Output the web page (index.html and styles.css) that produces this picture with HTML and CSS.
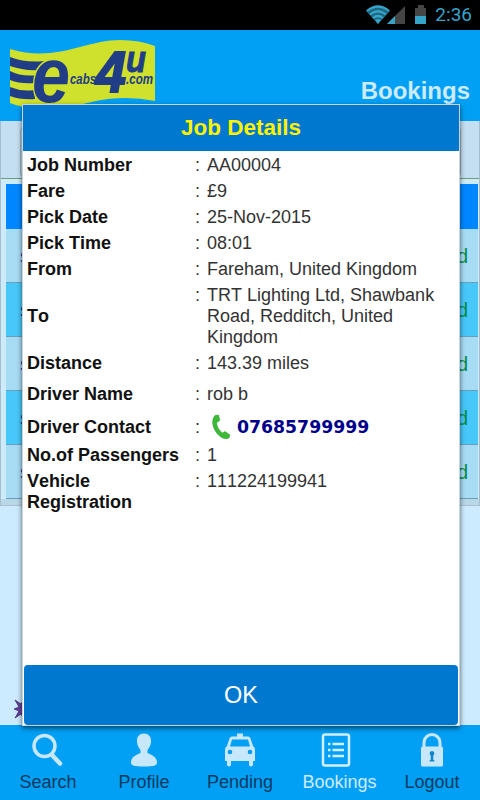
FILE: index.html
```
<!DOCTYPE html>
<html lang="en">
<head>
    <meta charset="UTF-8">
    <meta name="viewport" content="width=device-width, initial-scale=1.0">
    <title>Bookings</title>
    <link rel="stylesheet" href="styles.css">
</head>
<body>
<div class="screen">
    <div class="statusbar">
        <svg class="signal" width="60" height="20" viewBox="0 0 60 20">
            <path d="M0 6Q12-4 24 6L12 19Z" fill="#1d6680"/>
            <path d="M1 6Q12-3 23 6M4 9.500Q12 3 20 9.500M7 13Q12 9 17 13" fill="none" stroke="#36a4c9" stroke-width="2.200"/>
            <path d="M12 19l-3-4q3-2 6 0z" fill="#36a4c9"/>
            <path d="M39 1v18H21z" fill="#454545"/>
            <path d="M29 11v8h-8z" fill="#36a4c9"/>
            <path d="M49 3h3V0h6v3h3v16H49z" fill="#454545"/>
            <path d="M49 11h11v8H49z" fill="#36a4c9"/>
        </svg>
        <span class="clock">2:36</span>
    </div>
    <div class="header">
        <svg class="logo" width="145" height="70" viewBox="0 0 145 70">
            <path d="M0 9C45 23 75 0 110 0q20 0 35 6v55Q122 56 98 59C70 63 60 70 35 70Q12 68 0 63Z" fill="#cfe02d"/>
            <path d="M0 17Q16 23 34 21L29 30Q14 31 0 26ZM0 31Q12 37 27 35L24 43Q10 44 0 40ZM0 47Q12 52 24 50L25 59Q11 60 0 56Z" fill="#213d86"/>
            <g class="logo-text">
                <text x="22" y="62" font-size="78" textLength="38" lengthAdjust="spacingAndGlyphs" stroke="#cfe02d" stroke-width="3" paint-order="stroke">e</text>
                <text x="60" y="44" font-size="14" textLength="26" lengthAdjust="spacingAndGlyphs">cabs</text>
                <text x="86" y="52" font-size="57" textLength="30" lengthAdjust="spacingAndGlyphs" stroke="#213d86" stroke-width="2">4</text>
                <text x="116" y="32" font-size="37" textLength="20" lengthAdjust="spacingAndGlyphs" stroke="#213d86">u</text>
                <text x="116" y="44" font-size="14" textLength="27" lengthAdjust="spacingAndGlyphs">.com</text>
            </g>
        </svg>
        <h1>Bookings</h1>
    </div>
    <div class="content">
        <div class="panel">
            <div class="filter"><div class="filter-box"></div></div>
            <div class="list">
                <div class="list-head"></div>
                <div class="list-row"><a>s</a><span>d</span></div>
                <div class="list-row"><a>s</a><span>d</span></div>
                <div class="list-row"><a>s</a><span>d</span></div>
                <div class="list-row"><a>s</a><span>d</span></div>
                <div class="list-row"><a>s</a><span>d</span></div>
            </div>
        </div>
        <svg class="star" width="20" height="20" viewBox="0 0 20 20">
            <path d="M0 10l5-2-4-7 6 4 3-5 3 5 6-4-4 7 5 2-5 2 4 6-6-3-3 5-3-5-6 4 4-7z" fill="#67419c" stroke="#38236c" stroke-width=".7"/>
        </svg>
    </div>
    <div class="tabs">
        <div class="tab">
            <svg width="34" height="34" viewBox="0 0 34 34">
                <circle cx="13.500" cy="13" r="10.500" fill="none" stroke="#c7e8fb" stroke-width="3.500"/>
                <path d="M21 22l8 8.500" stroke="#c7e8fb" stroke-width="4.500" stroke-linecap="round"/>
            </svg>
            <span>Search</span>
        </div>
        <div class="tab">
            <svg width="34" height="34" viewBox="0 0 34 34">
                <path d="M17 0.500c-5 0-7.500 4-7 8.500.4 4 2 6 3.500 8v3C9 22 4 24 4 29.500c0 3 3 4 13 4s13-1 13-4C30 24 25 22 20.500 20v-3c1.500-2 3.100-4 3.500-8 .5-4.500-2-8.500-7-8.500z" fill="#c7e8fb"/>
            </svg>
            <span>Profile</span>
        </div>
        <div class="tab">
            <svg width="34" height="34" viewBox="0 0 34 34">
                <path fill-rule="evenodd" d="M14 0.500h6v3h5q2 0 2.500 2L30 13q2 1 2 4v11h-2v3.500q0 2-2 2t-2-2V28H8v3.500q0 2-2 2t-2-2V28H2V17q0-3 2-4L6.500 5.500q.5-2 2.500-2h5zM9 6.500L7 13.500h20l-2-7z" fill="#c7e8fb"/>
                <circle cx="7" cy="19" r="2.300" fill="#079bee"/>
                <circle cx="27" cy="19" r="2.300" fill="#079bee"/>
            </svg>
            <span>Pending</span>
        </div>
        <div class="tab active">
            <svg width="34" height="34" viewBox="0 0 34 34">
                <rect x="4" y="1.500" width="26" height="31" rx="2" fill="none" stroke="#d3efff" stroke-width="2.500"/>
                <path d="M9 11h2.500M9 17h2.500M9 23h2.500M13.500 11H25M13.500 17H25M13.500 23H25" stroke="#d3efff" stroke-width="2.500"/>
            </svg>
            <span>Bookings</span>
        </div>
        <div class="tab">
            <svg width="34" height="34" viewBox="0 0 34 34">
                <path d="M9 14V9.500a8 8 0 0 1 16 0V14" fill="none" stroke="#c7e8fb" stroke-width="3"/>
                <rect x="6" y="13.500" width="22" height="20" rx="1.500" fill="#c7e8fb"/>
                <path d="M17 18a2.400 2.400 0 0 1 1.300 4.400V27h1v1.500h-4.600V27h1v-4.600A2.400 2.400 0 0 1 17 18z" fill="#1387cb"/>
            </svg>
            <span>Logout</span>
        </div>
    </div>

    <div class="dialog">
        <h2>Job Details</h2>
        <table class="details">
            <tr><th>Job Number</th><td class="colon">:</td><td>AA00004</td></tr>
            <tr><th>Fare</th><td class="colon">:</td><td>£9</td></tr>
            <tr><th>Pick Date</th><td class="colon">:</td><td>25-Nov-2015</td></tr>
            <tr><th>Pick Time</th><td class="colon">:</td><td>08:01</td></tr>
            <tr><th>From</th><td class="colon">:</td><td>Fareham, United Kingdom</td></tr>
            <tr class="to"><th>To</th><td class="colon">:</td><td>TRT Lighting Ltd, Shawbank<br>Road, Redditch, United<br>Kingdom</td></tr>
            <tr><th>Distance</th><td class="colon">:</td><td>143.39 miles</td></tr>
            <tr class="driver"><th>Driver Name</th><td class="colon">:</td><td>rob b</td></tr>
            <tr class="contact"><th>Driver Contact</th><td class="colon">:</td><td>
                <div class="phone">
                    <svg width="22" height="26" viewBox="0 0 22 26">
                        <path d="M5 1.500L8.500 1l1.300 5.500L6.700 8.500c0 4 2.300 8 5.800 10.500L15 17.500l5 3.500-1 2.800c-3 2-7 .5-10.500-2.800C3 15.500.5 6.500 5 1.500z" fill="#3cba35" stroke="#278f29" stroke-width=".5"/>
                    </svg>
                    <span>07685799999</span>
                </div>
            </td></tr>
            <tr><th>No.of Passengers</th><td class="colon">:</td><td>1</td></tr>
            <tr class="vehicle"><th>Vehicle<br>Registration</th><td class="colon">:</td><td>111224199941</td></tr>
        </table>
        <button class="ok">OK</button>
    </div>
</div>
</body>
</html>
```
FILE: styles.css
```
*{
    padding: 0;
    margin: 0;
    box-sizing: border-box;
}
body{
    font-family: "Liberation Sans", Arial, sans-serif;
    font-size: 18px;
    font-kerning: none;
}
.screen{
    position: relative;
    display: flex;
    flex-direction: column;
    width: 480px;
    height: 800px;
    overflow: hidden;
}
.statusbar{
    display: flex;
    justify-content: flex-end;
    height: 30px;
    padding: 5px 8px 0 0;
    background: #000;
}
.signal{
    margin-right: 9px;
}
.clock{
    font-family: Roboto, sans-serif;
    font-size: 19px;
    line-height: 20px;
    color: #36a4c9;
}
.header{
    display: flex;
    justify-content: space-between;
    height: 91px;
    padding: 10px 10px 0;
    background: #02a0f5;
}
.logo-text{
    font-style: italic;
    font-weight: bold;
    fill: #213d86;
}
.header h1{
    padding-top: 38px;
    font-size: 24px;
    line-height: 26px;
    color: #cdebff;
}
.content{
    flex: 1;
    background: #cdebff;
}
.panel{
    height: 385px;
    padding-bottom: 6px;
    border-left: 1px solid #a5bdcc;
    border-right: 1px solid #a5bdcc;
    border-bottom: 1px solid #adc1cd;
    background: #b8d7e7;
}
.filter{
    height: 58px;
    padding: 5px 18px 0 19px;
    background: #c4dff1;
    border-bottom: 1px solid #6c9f71;
}
.filter-box{
    height: 52px;
    border: 1px solid #9fb6c5;
    border-radius: 5px;
}
.list{
    padding: 5px 1px 0 5px;
    background: #cdebfa;
}
.list-head{
    height: 45px;
    background: #0087ff;
}
.list-row{
    display: flex;
    justify-content: space-between;
    height: 54px;
    padding: 16px 10px 0 14px;
    border-bottom: 1px solid #6b9fb9;
    background: #a8dcf5;
    font-size: 20px;
    line-height: 22px;
    color: #078c49;
}
.list-row:nth-child(odd){
    background: #48c8fa;
}
.list-row a{
    color: #1b34ad;
}
.star{
    display: block;
    margin: 193px 0 0 14px;
}
.tabs{
    display: flex;
    height: 75px;
    padding-top: 8px;
    background: #02a0f5;
}
.tab{
    flex: 1;
    display: flex;
    flex-direction: column;
    align-items: center;
    line-height: 22px;
    color: #073a60;
}
.tab span{
    padding-top: 4px;
}
.tab.active{
    color: #cdebff;
}
.active span{
    padding-left: 7px;
}
/* popup over the list */
.dialog{
    position: absolute;
    top: 104px;
    left: 22px;
    width: 438px;
    height: 622px;
    display: flex;
    flex-direction: column;
    border: 1px solid #c5d4dd;
    background: #fff;
    box-shadow: 0 2px 5px rgba(0,0,0,.6);
}
.dialog h2{
    height: 46px;
    background: #0078d0;
    font-size: 22.5px;
    line-height: 45px;
    text-align: center;
    color: #fff200;
}
.details{
    width: 428px;
    margin: 1px 0 0 4px;
    border-collapse: collapse;
    table-layout: fixed;
    line-height: 21px;
    color: #333;
}
.details tr{
    height: 26px;
}
.details th{
    width: 168px;
    text-align: left;
    color: #111;
}
.details .colon{
    width: 12px;
}
.details .to{
    height: 68px;
}
.to .colon,
.vehicle .colon{
    padding-top: 3px;
    vertical-align: top;
}
.details .driver{
    height: 36px;
}
.details .contact{
    height: 30px;
}
.details .vehicle{
    height: 47px;
}
.vehicle td{
    padding-top: 3px;
    vertical-align: top;
}
.phone{
    display: flex;
    align-items: center;
    gap: 5px;
    padding-left: 3px;
    font-family: "DejaVu Sans", sans-serif;
    font-size: 17.3px;
    font-weight: bold;
    color: #00008b;
}
.ok{
    height: 60px;
    margin: auto 1px 0;
    border: 0;
    border-radius: 4px;
    background: #0078d0;
    font: 23.500px "Liberation Sans", Arial, sans-serif;
    color: #fff;
}
```
